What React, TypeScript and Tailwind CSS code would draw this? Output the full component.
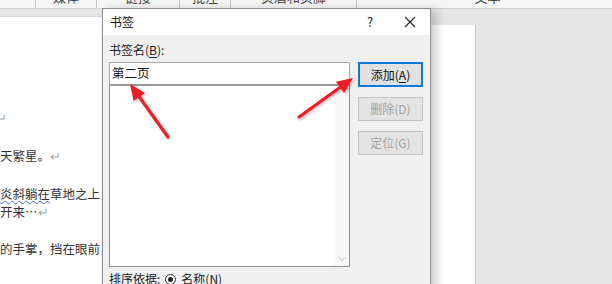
import React from "react";

const tabs = [
  { label: "", w: "w-[36px]" },
  { label: "媒体", w: "w-[61px]" },
  { label: "链接", w: "w-[83px]" },
  { label: "批注", w: "w-[51px]" },
  { label: "页眉和页脚", w: "w-[126px]" },
];

function Arrow({ x1, y1, x2, y2 }: { x1: number; y1: number; x2: number; y2: number }) {
  const dx = x2 - x1;
  const dy = y2 - y1;
  const len = Math.sqrt(dx * dx + dy * dy);
  const ux = dx / len;
  const uy = dy / len;
  const head = 16;
  const half = 7;
  const bx = x2 - ux * head;
  const by = y2 - uy * head;
  const p1 = `${bx - uy * half},${by + ux * half}`;
  const p2 = `${bx + uy * half},${by - ux * half}`;
  return (
    <g>
      <line x1={x1} y1={y1} x2={bx + ux * 2} y2={by + uy * 2} stroke="#ee1c25" strokeWidth={3.2} strokeLinecap="round" />
      <polygon points={`${x2},${y2} ${p1} ${p2}`} fill="#ee1c25" />
    </g>
  );
}

export default function App() {
  return (
    <div className="relative w-[612px] h-[284px] overflow-hidden bg-[#e6e6e6] font-['Noto_Sans_CJK_SC',sans-serif] text-[12px] text-[#222]">
      {/* Ribbon group labels (cut off at the top) */}
      <div className="flex h-[9px] bg-[#f6f6f6] border-b border-[#d2d2d2] overflow-hidden">
        {tabs.map((t, i) => (
          <div key={i} className={`${t.w} flex justify-center border-r border-[#c8c8c8] h-[8px]`}>
            <span className="-mt-[10px] leading-[14px] text-[13px] text-[#444]">{t.label}</span>
          </div>
        ))}
        <div className="flex-1 flex justify-center pl-[6px]">
          <span className="-mt-[10px] leading-[14px] text-[13px] text-[#444]">文本</span>
        </div>
      </div>

      <div className="flex">
        {/* document text on the left */}
        <div className="w-[110px] h-[280px] mt-[7px] bg-white border-t border-[#d6d6d6] text-[12.5px] leading-[18px] text-[#333] whitespace-nowrap">
          <p className="mt-[92px] -ml-[4px] text-[#aaa]">↵</p>
          <p className="mt-[20px]">天繁星。<span className="text-[#aaa]">↵</span></p>
          <p className="mt-[20px]">
            <span className="underline decoration-wavy decoration-[#4472c4] decoration-1 underline-offset-[1px]">炎斜躺在</span>草地之上，
          </p>
          <p>开来…<span className="text-[#aaa]">↵</span></p>
          <p className="mt-[19px]">的手掌，挡在眼前，</p>
        </div>
        <div className="w-[320px]" />
        <div className="w-[46px] h-[280px] mt-[16px] bg-white border-r border-[#c9c9c9]" />
      </div>

      {/* 书签 dialog */}
      <div className="absolute left-[102px] top-[8px] w-[329px] h-[290px] bg-[#f0f0f0] border border-[#8c8c8c] shadow-[5px_2px_10px_rgba(0,0,0,0.22)]">
        <div className="flex items-center h-[26px] bg-white pl-[7px]">
          <span className="text-[12px] text-[#111]">书签</span>
          <span className="ml-auto w-[12px] text-center text-[13px] text-[#222]">?</span>
          <svg className="ml-[28px] mr-[14px]" width="12" height="12" viewBox="0 0 12 12">
            <path d="M1 1 L11 11 M11 1 L1 11" stroke="#222" strokeWidth="1.1" />
          </svg>
        </div>

        <div className="px-[6px] pt-[8px]">
          <div className="leading-[14px]">
            书签名(<span className="underline underline-offset-2">B</span>):
          </div>
          <div className="flex gap-[8px] mt-[5px]">
            <div className="w-[241px]">
              <div className="h-[24px] bg-white border border-[#a8a8a8] border-b-2 border-b-[#9a9a9a] flex items-center pl-[2px] text-[12.5px] text-[#111]">
                第二页
              </div>
              <div className="flex h-[181px] bg-white border border-t-0 border-[#8e8e8e]">
                <div className="flex-1" />
                <div className="w-[15px] bg-[#f7f7f7] flex flex-col justify-end items-center pb-[4px]">
                  <svg width="8" height="6" viewBox="0 0 8 6">
                    <path d="M1 1.5 L4 4.5 L7 1.5" fill="none" stroke="#b5b5b5" strokeWidth="1" />
                  </svg>
                </div>
              </div>
            </div>

            <div className="w-[65px] flex flex-col gap-[10px]">
              <div className="h-[25px] bg-[#e1e1e1] border-2 border-[#0a78d7] flex items-center justify-center text-[#111]">
                添加(<span className="underline underline-offset-2">A</span>)
              </div>
              <div className="h-[24px] bg-[#e3e3e3] border border-[#c2c2c2] flex items-center justify-center text-[#a3a3a3]">
                删除(D)
              </div>
              <div className="h-[24px] bg-[#e3e3e3] border border-[#c2c2c2] flex items-center justify-center text-[#a3a3a3]">
                定位(G)
              </div>
            </div>
          </div>

          <div className="flex items-center mt-[5px] leading-[14px]">
            <span>排序依据:</span>
            <span className="ml-[5px] w-[11px] h-[11px] rounded-full border border-[#333] bg-white flex items-center justify-center">
              <span className="w-[5px] h-[5px] rounded-full bg-[#222]" />
            </span>
            <span className="ml-[5px]">名称(N)</span>
          </div>
        </div>
      </div>

      {/* red arrows */}
      <svg className="absolute left-0 top-0 pointer-events-none" width="612" height="284" viewBox="0 0 612 284">
        <defs>
          <filter id="sh" x="-20%" y="-20%" width="140%" height="140%">
            <feDropShadow dx="1.5" dy="1.5" stdDeviation="1" floodColor="#000" floodOpacity="0.25" />
          </filter>
        </defs>
        <g filter="url(#sh)">
          <Arrow x1={168} y1={137} x2={130} y2={84} />
          <Arrow x1={299} y1={117} x2={353} y2={78} />
        </g>
      </svg>
    </div>
  );
}
